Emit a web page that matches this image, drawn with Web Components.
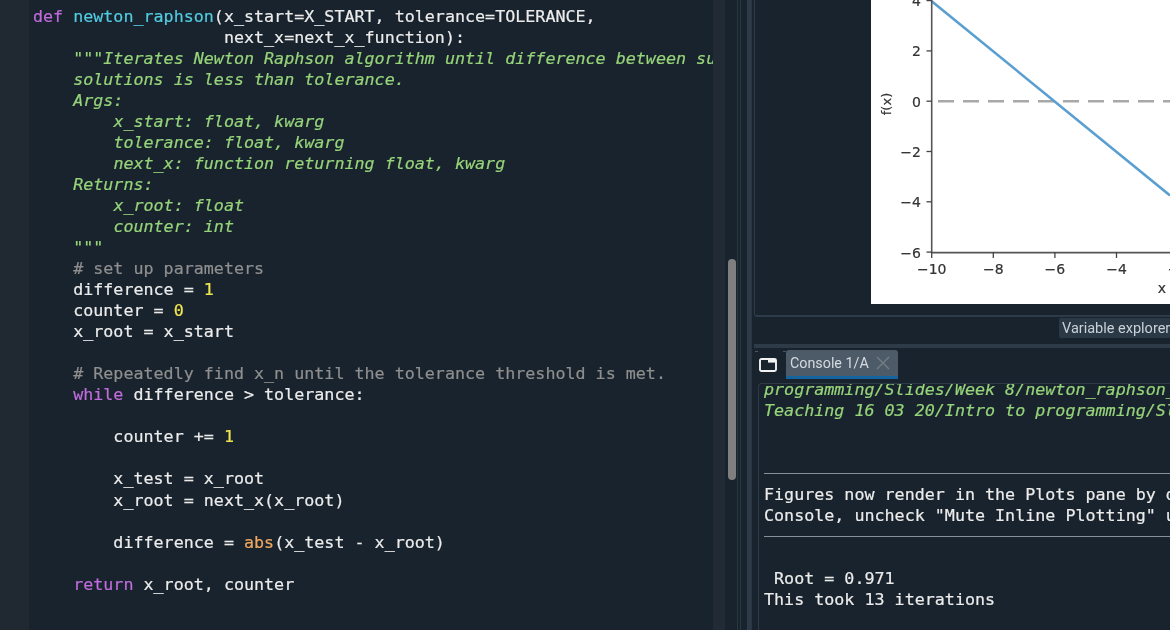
<!DOCTYPE html>
<html>
<head>
<meta charset="utf-8">
<title>Spyder</title>
<style>
  html, body { margin: 0; background: #19232d; overflow: hidden; }
</style>
</head>
<body>
<ide-app>
  <code-editor slot="editor">
    <code-line><py-tok kind="kw">def</py-tok> <py-tok kind="def">newton_raphson</py-tok>(x_start=X_START, tolerance=TOLERANCE,</code-line>
    <code-line>                   next_x=next_x_function):</code-line>
    <code-line>    <py-tok kind="str">"""Iterates Newton Raphson algorithm until difference between successive</py-tok></code-line>
    <code-line>    <py-tok kind="str">solutions is less than tolerance.</py-tok></code-line>
    <code-line>    <py-tok kind="str">Args:</py-tok></code-line>
    <code-line>        <py-tok kind="str">x_start: float, kwarg</py-tok></code-line>
    <code-line>        <py-tok kind="str">tolerance: float, kwarg</py-tok></code-line>
    <code-line>        <py-tok kind="str">next_x: function returning float, kwarg</py-tok></code-line>
    <code-line>    <py-tok kind="str">Returns:</py-tok></code-line>
    <code-line>        <py-tok kind="str">x_root: float</py-tok></code-line>
    <code-line>        <py-tok kind="str">counter: int</py-tok></code-line>
    <code-line>    <py-tok kind="str">"""</py-tok></code-line>
    <code-line>    <py-tok kind="com"># set up parameters</py-tok></code-line>
    <code-line>    difference = <py-tok kind="num">1</py-tok></code-line>
    <code-line>    counter = <py-tok kind="num">0</py-tok></code-line>
    <code-line>    x_root = x_start</code-line>
    <code-line></code-line>
    <code-line>    <py-tok kind="com"># Repeatedly find x_n until the tolerance threshold is met.</py-tok></code-line>
    <code-line>    <py-tok kind="kw">while</py-tok> difference &gt; tolerance:</code-line>
    <code-line></code-line>
    <code-line>        counter += <py-tok kind="num">1</py-tok></code-line>
    <code-line></code-line>
    <code-line>        x_test = x_root</code-line>
    <code-line>        x_root = next_x(x_root)</code-line>
    <code-line></code-line>
    <code-line>        difference = <py-tok kind="bi">abs</py-tok>(x_test - x_root)</code-line>
    <code-line></code-line>
    <code-line>    <py-tok kind="kw">return</py-tok> x_root, counter</code-line>
  </code-editor>
  <edge-strip slot="strip"></edge-strip>
  <plot-pane slot="plot"></plot-pane>
  <dock-tab slot="dock">Variable explorer</dock-tab>
  <console-pane slot="console">
    <code-line><py-tok kind="str">programming/Slides/Week 8/newton_raphson_example.py', wdir='C:/Users/Documents/</py-tok></code-line>
    <code-line><py-tok kind="str">Teaching 16 03 20/Intro to programming/Slides/Week 8')</py-tok></code-line>
    <code-line></code-line>
    <code-line></code-line>
    <console-rule></console-rule>
    <code-line>Figures now render in the Plots pane by default. To make them also appear inline in the</code-line>
    <code-line>Console, uncheck "Mute Inline Plotting" under the Plots pane options menu.</code-line>
    <console-rule></console-rule>
    <code-line></code-line>
    <code-line> Root = 0.971</code-line>
    <code-line>This took 13 iterations</code-line>
  </console-pane>
</ide-app>

<script>
const MONO = `"DejaVu Sans Mono", "Liberation Mono", monospace`;
const UI = `Roboto, "Open Sans", "Liberation Sans", sans-serif`;

// small helper, every component is just a style + markup in an open shadow root
// trim: a leading newline in the shadow would show up inside white-space: pre hosts
function shadowOf(el, html) {
  el.attachShadow({ mode: "open" }).innerHTML = html.trim();
}

customElements.define("ide-app", class extends HTMLElement {
  constructor() {
    super();
    shadowOf(this, `
      <style>
        :host { display: flex; width: 1170px; height: 630px; overflow: hidden; background: #19232d; filter: blur(.4px); }
        .right { width: 416px; flex: none; display: flex; flex-direction: column; }
        .dock { height: 27px; flex: none; display: flex; padding: 1px 0 0 305px; box-sizing: border-box; overflow: hidden; }
        .split { height: 4px; flex: none; background: #2d3b48; }
      </style>
      <slot name="editor"></slot>
      <slot name="strip"></slot>
      <div class="right">
        <slot name="plot"></slot>
        <div class="dock"><slot name="dock"></slot></div>
        <div class="split"></div>
        <slot name="console"></slot>
      </div>`);
  }
});

customElements.define("code-editor", class extends HTMLElement {
  constructor() {
    super();
    shadowOf(this, `
      <style>
        :host { display: flex; width: 713px; height: 630px; flex: none; overflow: hidden; }
        .gutter { width: 29px; flex: none; background: #202832; }
        .code { flex: 1; min-width: 0; padding: 5.8px 0 0 4px; overflow: hidden; }
      </style>
      <div class="gutter"></div>
      <div class="code"><slot></slot></div>`);
  }
});

customElements.define("code-line", class extends HTMLElement {
  constructor() {
    super();
    shadowOf(this, `
      <style>
        :host { display: block; height: 21.04px; white-space: pre;
                font: 16.7px/21.04px ${MONO}; color: #ececec; -webkit-text-stroke: .2px currentColor; }
      </style><slot></slot>`);
  }
});

customElements.define("py-tok", class extends HTMLElement {
  constructor() {
    super();
    shadowOf(this, `
      <style>
        :host { display: inline; }
        :host([kind=kw]) { color: #c06cdc; }
        :host([kind=def]) { color: #52cbe0; }
        :host([kind=str]) { color: #96d47a; font-style: italic; }
        :host([kind=com]) { color: #8f8f8f; }
        :host([kind=num]) { color: #f0e650; }
        :host([kind=bi]) { color: #f0a860; }
      </style><slot></slot>`);
  }
});

// the stack of thin panel edges between editor and right column, with the scrollbar
customElements.define("edge-strip", class extends HTMLElement {
  constructor() {
    super();
    shadowOf(this, `
      <style>
        :host { display: flex; width: 41px; height: 630px; flex: none; }
        .a { width: 12px; background: #222a35; }
        .gap { width: 2px; }
        .line { width: 1px; background: #2a3642; }
        .track { width: 10px; padding-top: 259px; box-sizing: border-box; }
        .thumb { width: 8px; height: 221px; margin-left: 1px; border-radius: 4px; background: #7f7f7f; }
        .g5 { width: 6px; }
        .b { width: 4px; background: #2d3b48; }
      </style>
      <div class="a"></div>
      <div class="gap"></div>
      <div class="track"><div class="thumb"></div></div>
      <div class="line"></div>
      <div class="gap"></div>
      <div class="line"></div>
      <div class="g5"></div>
      <div class="b"></div>
      <div class="line"></div>
      <div class="gap"></div>`);
  }
});

customElements.define("plot-pane", class extends HTMLElement {
  constructor() {
    super();
    const yAt = v => 101.2 - 25.15 * v;
    const xAt = v => 931.7 + (v + 10) * 30.8;
    const label = v => (v < 0 ? "\u2212" + (-v) : "" + v);
    let marks = "";
    for (const v of [4, 2, 0, -2, -4, -6]) {
      marks += `<line x1="926.5" x2="931.7" y1="${yAt(v)}" y2="${yAt(v)}" class="ax"/>`;
      marks += `<text x="921" y="${yAt(v) + 5.5}" text-anchor="end">${label(v)}</text>`;
    }
    for (const v of [-10, -8, -6, -4, -2]) {
      marks += `<line x1="${xAt(v)}" x2="${xAt(v)}" y1="252" y2="258" class="ax"/>`;
      marks += `<text x="${xAt(v)}" y="274" text-anchor="middle">${label(v)}</text>`;
    }
    shadowOf(this, `
      <style>
        :host { display: flex; justify-content: flex-end; align-items: flex-start; height: 317px; flex: none;
                box-sizing: border-box; border-left: 1px solid #2d3b48; border-bottom: 2px solid #2d3b48;
                border-bottom-left-radius: 3px; }
        svg { display: block; background: #fff; }
        text { font: 14px "DejaVu Sans", sans-serif; fill: #333; stroke: #333; stroke-width: .2px; }
        .ax { stroke: #444; stroke-width: 1.3; }
      </style>
      <svg width="299" height="304" viewBox="871 0 299 304">
        <line x1="931.7" x2="1170" y1="101.2" y2="101.2" stroke="#a8a8a8" stroke-width="2.4" stroke-dasharray="16 9" stroke-dashoffset="18.7"/>
        <line x1="931.7" x2="1170" y1="1.2" y2="195.5" stroke="#5a9fd0" stroke-width="2.6"/>
        <line x1="931.7" x2="931.7" y1="0" y2="252.7" stroke="#555" stroke-width="1.6"/>
        <line x1="931" x2="1170" y1="252.6" y2="252.6" stroke="#555" stroke-width="1.6"/>
        ${marks}
        <text transform="translate(891 104) rotate(-90)" text-anchor="middle" style="font-size:13px">f(x)</text>
        <text x="1162" y="293" text-anchor="middle">x</text>
      </svg>`);
  }
});

customElements.define("dock-tab", class extends HTMLElement {
  constructor() {
    super();
    shadowOf(this, `
      <style>
        :host { display: block; flex: none; height: 20px; padding: 0 12px 0 3px; background: #2b3947;
                border-radius: 2px 0 0 2px; font: 14.5px/21px ${UI}; color: #c9d1d9; white-space: nowrap; }
      </style><slot></slot>`);
  }
});

customElements.define("console-rule", class extends HTMLElement {
  constructor() {
    super();
    shadowOf(this, `
      <style>
        :host { display: flex; align-items: center; height: 21.04px; }
        div { flex: 1; height: 1px; background: #8a9097; }
      </style><div></div>`);
  }
});

customElements.define("console-pane", class extends HTMLElement {
  constructor() {
    super();
    shadowOf(this, `
      <style>
        :host { display: flex; flex-direction: column; flex: 1; min-height: 0; }
        .bar { height: 35px; flex: none; display: flex; gap: 9px; padding: 2px 0 0 5px; box-sizing: border-box;
               background: linear-gradient(#4a5866,#4a5866) 1px 3px/3px 1px no-repeat,
                           linear-gradient(#4a5866,#4a5866) 29px 3px/3px 1px no-repeat; }
        .icon { width: 18px; height: 14px; margin-top: 8px; flex: none; }
        .tab { width: 112px; height: 29px; box-sizing: border-box; flex: none; display: flex; align-items: center;
               justify-content: space-between; padding: 0 8px 0 4px; background: #4d5b68;
               border-bottom: 3px solid #1464a0; border-radius: 3px 3px 0 0;
               font: 14.3px/1 ${UI}; color: #d5dadf; }
        .tab svg { width: 14px; height: 14px; }
        .body { flex: 1; min-height: 0; margin-left: 4px; padding-left: 5px; overflow: hidden;
                border-left: 1px solid #2d3b48; border-top: 1px solid #2d3b48; border-top-left-radius: 4px; }
        .scroll { margin-top: -5.5px; }
      </style>
      <div class="bar">
        <svg class="icon" viewBox="0 0 18 14">
          <rect x="1" y="1" width="16" height="12" rx="1.5" fill="none" stroke="#f2f2f2" stroke-width="1.9"/>
          <rect x="9" y="1" width="8" height="3.6" fill="#f2f2f2"/>
        </svg>
        <div class="tab"><span>Console 1/A</span>
          <svg viewBox="0 0 14 14"><path d="M1 1 13 13M13 1 1 13" stroke="#737e89" stroke-width="1.4" fill="none"/></svg>
        </div>
      </div>
      <div class="body"><div class="scroll"><slot></slot></div></div>`);
  }
});
</script>
</body>
</html>
